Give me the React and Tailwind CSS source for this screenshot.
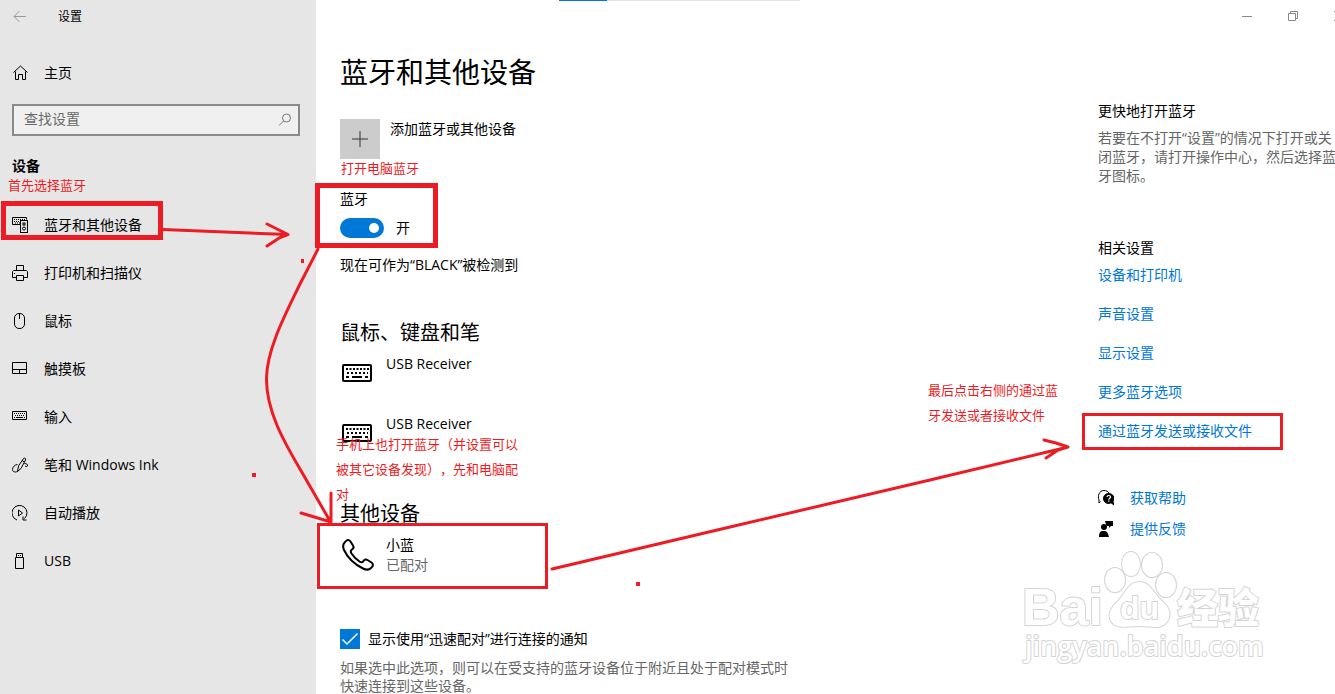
import { useState } from 'react';

const FONT = "font-['Open_Sans','Noto_Sans_CJK_SC',sans-serif]";

const Icon = ({ children, className = 'w-4 h-4', box = '0 0 16 16' }) => (
  <svg viewBox={box} className={`shrink-0 ${className}`} fill="none" stroke="currentColor" strokeWidth="1" aria-hidden="true">
    {children}
  </svg>
);

const BluetoothDevicesIcon = () => (
  <Icon>
    <path d="M8 7.500H.5v-7h14v2" />
    <path d="M2 2.500h11M2 4.500h6M3 6h5" strokeDasharray="1 1" />
    <rect x="8.500" y="3.500" width="7" height="12" />
    <rect x="11" y="6" width="2" height="2" />
    <circle cx="12" cy="11.500" r="1.500" />
  </Icon>
);

const PrinterIcon = () => (
  <Icon>
    <path d="M4.500 5.500v-5h7v5" />
    <path d="M4 12.500H.5v-6l1-1h13l1 1v6H12" />
    <path d="M4.500 10.500h7v5h-7z" />
    <path d="M2 8.500h1" />
  </Icon>
);

const MouseIcon = () => (
  <Icon>
    <rect x="2.500" y=".5" width="10" height="15" rx="4.500" />
    <path d="M7.500 1v5" />
  </Icon>
);

const TouchpadIcon = () => (
  <Icon>
    <path d="M.5 1.500h14v11H.5zM.5 8.500h14M7.500 8.500v4" />
  </Icon>
);

const TypingIcon = () => (
  <Icon>
    <path d="M.5 2.500h14v8H.5z" />
    <path d="M2 4.500h11M3 6.500h9" strokeDasharray="1 1" />
    <path d="M2 8.500h1M4 8.500h7M12 8.500h1" />
  </Icon>
);

const PenIcon = () => (
  <Icon>
    <path d="M5.500 14.500 6.500 9l5-7.500c.7-1 2.800-.2 2 1.500L9 11.500l-3.500 3zM10 3.500l2.500 1.500" />
    <path d="M5.500 7.500C3 7.500.5 10 .5 12.500c0 3 4 3 5.500 1.500M12.500 6.500c2 0 3.500 1 3 2.500-.5 1-1.500.5-2.500 0" />
  </Icon>
);

const AutoplayIcon = () => (
  <Icon>
    <path d="M5 15A7.500 7.500 0 1 1 12.500 13.500M11 11.500v3.500h3.500" />
    <path d="M6.500 5v6l4-3z" />
  </Icon>
);

const UsbIcon = () => (
  <Icon>
    <path d="M4.500 4.500v-4h6v4M3.500 4.500h8v11h-8zM6 2.500h1M8 2.500h1" />
  </Icon>
);

const KeyboardIcon = () => (
  <Icon className="w-8 h-8" box="0 0 32 32">
    <rect x="1" y="7" width="28" height="16" rx="1" strokeWidth="2" />
    <path d="M4 11h23" strokeWidth="2" strokeDasharray="2 1.500" />
    <path d="M5 15h21" strokeWidth="2" strokeDasharray="2 2" />
    <path d="M4 19h3M10 19h10M23 19h3" strokeWidth="2" />
  </Icon>
);

const PhoneIcon = () => (
  <Icon className="w-8 h-8" box="0 0 32 32">
    <path
      d="M3 3c2-2.500 4-2.500 5.500-.5l2.500 4c1 1.500.5 3-1 4-1.500 1-1.500 2.500-.5 4 2 3 5 6 8 8 1.500 1 3 1 4-.5 1-1.500 2.500-2 4-1l4 2.500c2 1.500 2 3.500-.5 5.500-2 2-5 2-8 .5C12 25 5.500 18.500 2 11 .7 8 1 5 3 3z"
      strokeWidth="2"
    />
  </Icon>
);

const HelpIcon = () => (
  <Icon>
    <path d="M2.500 11.500 1 13v-3C-.5 6 1 .5 6 .5c2.500 0 4 1 5 2.500" />
    <path d="M10.500 3.500a5 5 0 1 0 2.500 9.300l3 2.200-1-3.500a5 5 0 0 0-4.500-8z" fill="currentColor" />
    <path d="M9 7c0-2 3.500-2 3.500 0 0 1.300-1.700 1.200-1.700 2.700M10.800 10.500v1.200" stroke="white" strokeWidth="1.200" />
  </Icon>
);

const FeedbackIcon = () => (
  <Icon>
    <path d="M7 0h8v5h-2l-2 2V5H8.500z" fill="currentColor" stroke="none" />
    <circle cx="6" cy="6" r="3" fill="currentColor" stroke="none" />
    <path d="M1 16c0-4 1-6 3-6h3c2 0 3 2 4 6z" fill="currentColor" stroke="none" />
  </Icon>
);

const navItems = [
  { label: '蓝牙和其他设备', icon: BluetoothDevicesIcon },
  { label: '打印机和扫描仪', icon: PrinterIcon },
  { label: '鼠标', icon: MouseIcon },
  { label: '触摸板', icon: TouchpadIcon },
  { label: '输入', icon: TypingIcon },
  { label: '笔和 Windows Ink', icon: PenIcon },
  { label: '自动播放', icon: AutoplayIcon },
  { label: 'USB', icon: UsbIcon },
];

const relatedLinks = ['设备和打印机', '声音设置', '显示设置', '更多蓝牙选项', '通过蓝牙发送或接收文件'];

const Sidebar = () => (
  <aside className="w-[316px] shrink-0 bg-[#e6e6e6]">
    <div className="flex items-center h-[33px] px-3">
      <button type="button" aria-label="返回" className="text-[#999]">
        <Icon><path d="M2 7.500h12M7.500 2 2 7.500 7.500 13" /></Icon>
      </button>
      <span className="ml-[30px] text-xs">设置</span>
    </div>

    <a href="#home" className="flex items-center gap-4 h-12 mt-4 px-3">
      <Icon className="w-4 h-4">
        <path d="M1.500 7.500 8.500 1l7 6.500M3.500 6.500v8h3v-5h4v5h3v-8" />
      </Icon>
      主页
    </a>

    <div className="flex items-center h-8 mt-[7px] ml-3 mr-4 border-2 border-[#8a8a8a] bg-[#f0f0f0]">
      <input type="text" aria-label="查找设置" placeholder="查找设置" className="flex-1 min-w-0 px-[10px] pb-[2px] bg-transparent outline-none placeholder:text-[#6a6a6a]" />
      <button type="button" aria-label="搜索" className="mr-[5px] text-[#777]">
        <Icon><circle cx="9.500" cy="6" r="4" /><path d="M6.500 9 2 13.500" /></Icon>
      </button>
    </div>

    <h2 className="mt-5 px-3 leading-5 font-bold">设备</h2>

    <nav className="mt-[25px]">
      {navItems.map(({ label, icon: ItemIcon }) => (
        <a key={label} href="#device" className="flex items-center gap-4 h-12 px-3">
          <ItemIcon />
          {label}
        </a>
      ))}
    </nav>
  </aside>
);

const WindowBar = () => (
  <header className="flex items-start h-8 overflow-hidden">
    <div className="w-[241px] h-px ml-[243px] bg-[#e5e5e5]">
      <div className="w-12 h-px bg-[#0078d7]" />
    </div>
    <div className="flex ml-auto -mr-[27px] text-[#888]">
      <button type="button" aria-label="最小化" className="flex items-center justify-center w-[46px] h-8">
        <Icon className="w-[10px] h-[10px]" box="0 0 10 10"><path d="M0 5.500h10" /></Icon>
      </button>
      <button type="button" aria-label="还原" className="flex items-center justify-center w-[46px] h-8">
        <Icon className="w-[10px] h-[10px]" box="0 0 10 10"><path d="M.5 2.500h7v7h-7zM2.500 2V.5h7v7H8" /></Icon>
      </button>
      <button type="button" aria-label="关闭" className="flex items-center justify-center w-[46px] h-8">
        <Icon className="w-[10px] h-[10px]" box="0 0 10 10"><path d="M0 0l10 10M10 0 0 10" /></Icon>
      </button>
    </div>
  </header>
);

const Device = ({ name, status, icon: DeviceIcon }) => (
  <li className="flex h-10">
    <div className="flex items-center w-[44px] ml-[2px]"><DeviceIcon /></div>
    <div className="leading-5">
      <p>{name}</p>
      {status && <p className="text-[#666]">{status}</p>}
    </div>
  </li>
);

const Main = () => {
  const [bluetoothOn, setBluetoothOn] = useState(true);
  const [notify, setNotify] = useState(true);

  return (
    <main className="flex-1 min-w-0 pl-6">
      <h1 className="mt-5 text-[28px] leading-10">蓝牙和其他设备</h1>

      <button type="button" className="flex items-start gap-[10px] mt-[27px] text-left">
        <span className="flex items-center justify-center w-10 h-10 bg-[#ccc] text-[#333]">
          <Icon><path d="M8 0v16M0 8h16" /></Icon>
        </span>
        <span className="leading-5">添加蓝牙或其他设备</span>
      </button>

      <p className="mt-[30px] leading-5">蓝牙</p>
      <label className="flex items-center gap-3 mt-[9px] leading-5 w-fit">
        <input
          type="checkbox"
          role="switch"
          checked={bluetoothOn}
          onChange={(e) => setBluetoothOn(e.target.checked)}
          className="flex items-center justify-start checked:justify-end w-11 h-5 px-[5px] rounded-full appearance-none bg-[#999] checked:bg-[#0078d7] before:w-[10px] before:h-[10px] before:rounded-full before:bg-white"
        />
        {bluetoothOn ? '开' : '关'}
      </label>
      <p className="mt-[17px] leading-5">现在可作为“BLACK”被检测到</p>

      <h2 className="mt-11 text-xl leading-7">鼠标、键盘和笔</h2>
      <ul className="flex flex-col gap-5 mt-[7px]">
        <Device name="USB Receiver" icon={KeyboardIcon} />
        <Device name="USB Receiver" icon={KeyboardIcon} />
      </ul>

      <h2 className="mt-[46px] text-xl leading-7">其他设备</h2>
      <ul className="mt-[7px]">
        <Device name="小蓝" status="已配对" icon={PhoneIcon} />
      </ul>

      <label className="flex items-center gap-2 mt-[54px] leading-5 w-fit">
        <span className="grid w-5 h-5">
          <input
            type="checkbox"
            checked={notify}
            onChange={(e) => setNotify(e.target.checked)}
            className="col-start-1 row-start-1 w-5 h-5 appearance-none border-2 border-[#333] checked:border-[#0078d7] checked:bg-[#0078d7]"
          />
          {notify && (
            <Icon className="col-start-1 row-start-1 w-5 h-5 text-white pointer-events-none" box="0 0 20 20">
              <path d="M2.500 10.500 7 15 17.500 4.500" strokeWidth="1.500" />
            </Icon>
          )}
        </span>
        显示使用“迅速配对”进行连接的通知
      </label>
      <p className="max-w-[450px] mt-[10px] leading-[18px] text-[#666]">
        如果选中此选项，则可以在受支持的蓝牙设备位于附近且处于配对模式时快速连接到这些设备。
      </p>
    </main>
  );
};

const RelatedPanel = () => (
  <aside className="w-60 shrink-0 -mr-[3px] pt-[69px]">
    <h3 className="leading-5">更快地打开蓝牙</h3>
    <p className="mt-[7px] leading-[19px] text-[#666]">
      若要在不打开“设置”的情况下打开或关闭蓝牙，请打开操作中心，然后选择蓝牙图标。
    </p>

    <h3 className="mt-[53px] leading-5">相关设置</h3>
    <ul className="flex flex-col gap-[19px] mt-[7px] leading-5 text-[#0078d7]">
      {relatedLinks.map((link) => (
        <li key={link}><a href="#related">{link}</a></li>
      ))}
    </ul>

    <div className="flex flex-col gap-[11px] mt-[47px] leading-5">
      <a href="#help" className="flex items-center gap-4">
        <HelpIcon />
        <span className="text-[#0078d7]">获取帮助</span>
      </a>
      <a href="#feedback" className="flex items-center gap-4">
        <FeedbackIcon />
        <span className="text-[#0078d7]">提供反馈</span>
      </a>
    </div>
  </aside>
);

const Watermark = () => (
  <svg
    viewBox="0 0 250 120"
    className="absolute left-[1018px] top-[548px] w-[250px] h-[120px] pointer-events-none"
    fill="white"
    stroke="#d4d4d4"
    strokeWidth="2"
    strokeLinejoin="round"
    paintOrder="stroke"
  >
    <text x="4" y="77" fontSize="52" fontWeight="700" fontFamily="Liberation Sans, sans-serif">Bai</text>
    <ellipse cx="97" cy="32" rx="10" ry="12" />
    <ellipse cx="113" cy="16" rx="9" ry="12" />
    <ellipse cx="134" cy="17" rx="10" ry="12" />
    <ellipse cx="148" cy="37" rx="10" ry="12" />
    <path d="M121 34c-10 0-14 11-20 18-7 7-12 13-8 21 5 9 17 5 28 5s22 4 28-4c6-9 1-16-7-23-7-7-10-17-21-17z" />
    <text x="102" y="71" fontSize="32" fontWeight="700" fontFamily="Liberation Sans, sans-serif">du</text>
    <text x="159" y="75" fontSize="41" fontWeight="900" fontFamily="Noto Sans CJK SC, sans-serif">经验</text>
    <text x="7" y="108" fontSize="27" fontWeight="600" fontFamily="Open Sans, sans-serif">jingyan.baidu.com</text>
  </svg>
);

// hand-drawn boxes, arrows and notes on top of the settings page
const Annotations = () => (
  <div className="absolute inset-0 pointer-events-none text-[#ed1c24] text-[13px] [text-spacing-trim:space-all]">
    <svg viewBox="0 0 1335 694" className="absolute left-0 top-0 w-[1335px] h-[694px]" fill="none" stroke="currentColor" strokeWidth="3">
      <rect x="3.500" y="203.500" width="157" height="34" strokeWidth="5" />
      <rect x="317.500" y="185.500" width="118" height="60" strokeWidth="5" />
      <rect x="318.500" y="524.500" width="228" height="63" />
      <rect x="1083.500" y="414.500" width="198" height="34" />
      <g strokeLinecap="round" strokeLinejoin="round">
        <path d="M163 229.500 200 231l88 3.500M267 224l10 5 11 5.500-8 3-13 8.500" />
        <path d="M318 249 300 284C285 315 267 349 266.500 378c-.5 32 17 63 33.500 91l30 52M301 513l30 9v-29" />
        <path d="M552 569 730 527l200-47 138-33M1044 440l12 3 12 4-10 3-12 8" />
      </g>
      <g fill="currentColor" stroke="none">
        <rect x="301" y="259" width="3" height="4" />
        <rect x="252" y="473" width="4" height="4" />
        <rect x="636" y="582" width="4" height="4" />
      </g>
    </svg>
    <p className="absolute left-2 top-[175px] leading-5">首先选择蓝牙</p>
    <p className="absolute left-[341px] top-[158px] leading-5">打开电脑蓝牙</p>
    <p className="absolute left-[336px] top-[432px] w-[186px] leading-[25px]">
      手机上也打开蓝牙（并设置可以被其它设备发现），先和电脑配对
    </p>
    <p className="absolute left-[928px] top-[378px] w-[134px] leading-[25px]">最后点击右侧的通过蓝牙发送或者接收文件</p>
  </div>
);

const App = () => (
  <div lang="zh-CN" className={`relative flex min-h-screen overflow-hidden bg-white text-black text-sm ${FONT}`}>
    <Sidebar />
    <div className="flex flex-col flex-1 min-w-0">
      <WindowBar />
      <div className="flex flex-1">
        <Main />
        <RelatedPanel />
      </div>
    </div>
    <Watermark />
    <Annotations />
  </div>
);

export default App;
